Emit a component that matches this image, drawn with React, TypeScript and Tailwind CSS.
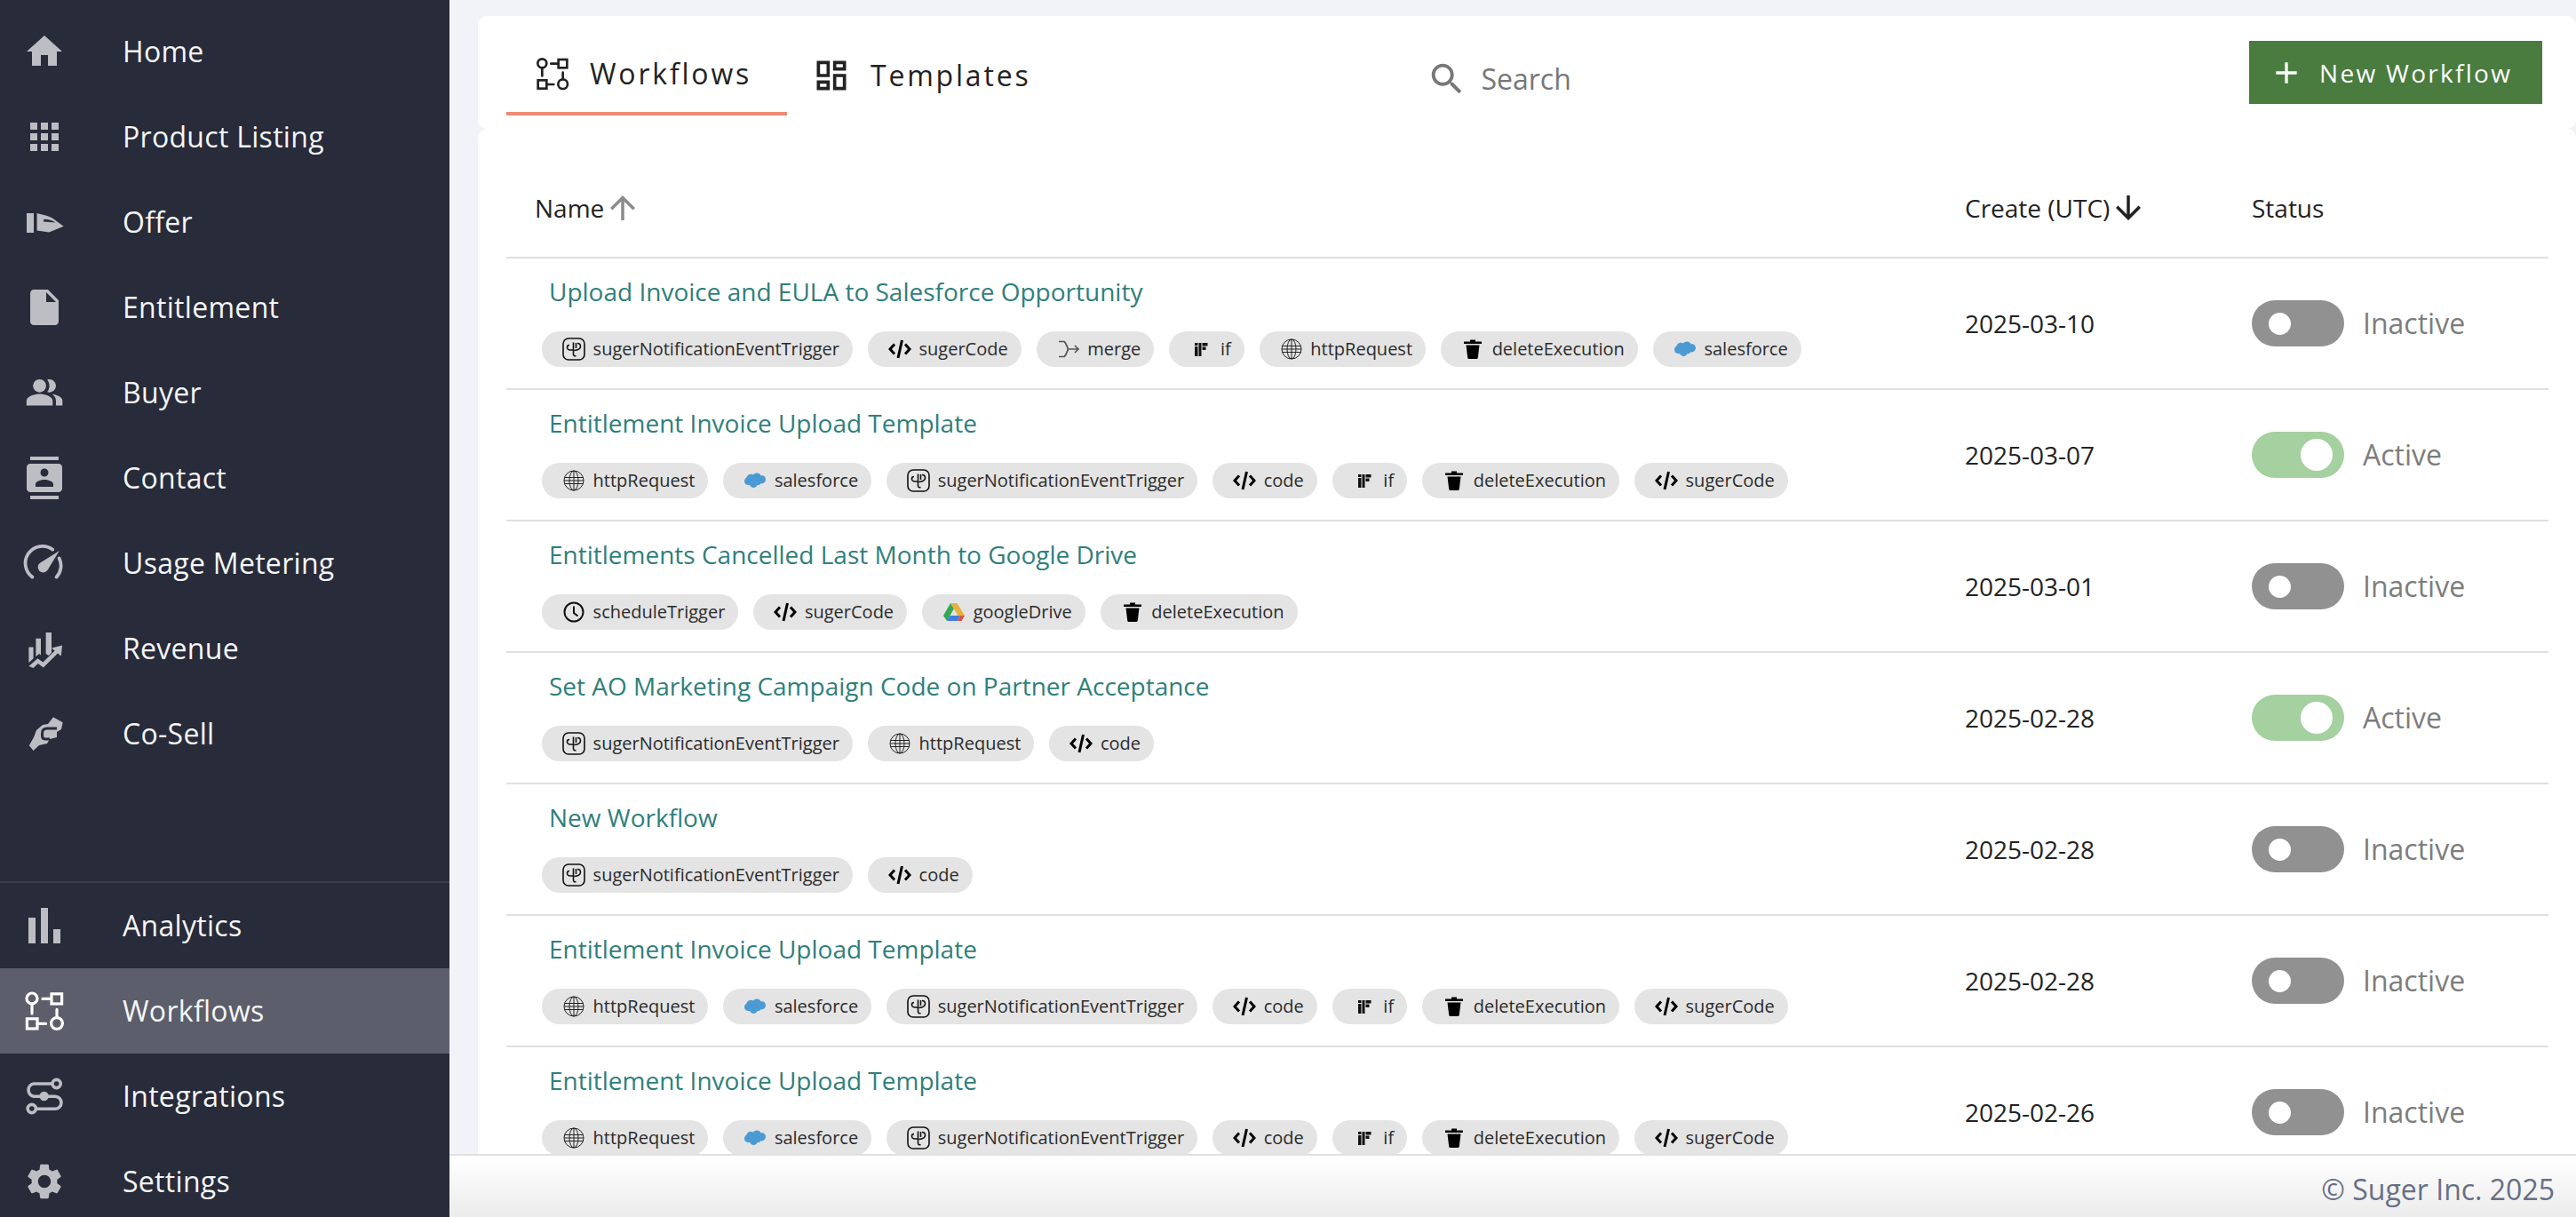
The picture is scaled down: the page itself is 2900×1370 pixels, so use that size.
import { ReactNode } from "react";

type NavItem = { label: string; icon: ReactNode; active?: boolean };
type Chip = "suger" | "sugerCode" | "code" | "merge" | "if" | "http" | "delete" | "salesforce" | "schedule" | "drive";

const HomeIcon = () => <path d="M10 20v-6h4v6h5v-8h3L12 3 2 12h3v8z" />;
const GridIcon = () => (
  <path d="M4 8h4V4H4v4zm6 12h4v-4h-4v4zm-6 0h4v-4H4v4zm0-6h4v-4H4v4zm6 0h4v-4h-4v4zm6-10v4h4V4h-4zm-6 4h4V4h-4v4zm6 6h4v-4h-4v4zm0 6h4v-4h-4v4z" />
);
const OfferIcon = () => (
  <>
    <path d="M2 7h4v11H2z" />
    <path
      fillRule="evenodd"
      d="M7.8 7l5.4 1.4c2.4.7 3.9 1.7 5.3 2.8l4.3 3.2-8.2 3.4-6.8-1V7zm4 3.4l-.4 1.3 6.8.5c-1.8-1.2-3.9-1.8-6.4-1.8z"
    />
  </>
);
const FileIcon = () => (
  <path d="M6 2c-1.1 0-1.99.9-1.99 2L4 20c0 1.1.89 2 1.99 2H18c1.1 0 2-.9 2-2V8l-6-6H6zm7 7V3.5L18.5 9H13z" />
);
const BuyerIcon = () => (
  <g transform="translate(1 .8) scale(.92)">
    <path d="M16.67 13.13C18.04 14.06 19 15.32 19 17v3h4v-3c0-2.18-3.57-3.47-6.33-3.87z" />
    <circle cx="9" cy="8" r="4" />
    <path d="M15 12c2.21 0 4-1.79 4-4s-1.79-4-4-4c-.47 0-.91.1-1.33.24C14.5 5.27 15 6.58 15 8s-.5 2.73-1.33 3.76c.42.14.86.24 1.33.24zm-6 1c-2.67 0-8 1.34-8 4v3h16v-3c0-2.66-5.33-4-8-4z" />
  </g>
);
const ContactIcon = () => (
  <path d="M20 0H4v2h16V0zM4 24h16v-2H4v2zM20 4H4c-1.1 0-2 .9-2 2v12c0 1.1.9 2 2 2h16c1.1 0 2-.9 2-2V6c0-1.1-.9-2-2-2zm-8 2.75c1.24 0 2.25 1.01 2.25 2.25s-1.01 2.25-2.25 2.25S9.75 10.24 9.75 9 10.76 6.75 12 6.75zM17 17H7v-1.5c0-1.67 3.33-2.5 5-2.5s5 .83 5 2.5V17z" />
);
const SpeedIcon = () => (
  <>
    <path
      d="M5.2 19.8A9.4 9.4 0 0 1 16.6 4.3M20.3 9.2a9.4 9.4 0 0 1-1.5 10.6"
      fill="none"
      stroke="currentColor"
      strokeWidth="1.9"
      strokeLinecap="round"
    />
    <path d="M20.4 5l-6.6 10.9a3 3 0 1 1-4.1-4.2z" />
  </>
);
const RevenueIcon = () => (
  <>
    <path d="M3.2 11.2h2.6v6.4L3.2 20zM7.2 6.4h2.8v9.4l-1-.8-1.8 1.6zM12.8 3h3.2v11.4l-1.6 1.6-1.6-1z" />
    <path d="M3.2 22l5-4.4 3 2.2 6.6-6.6-1.800-1.400 6-1.600-.6 6-1.900-1.500-8.100 8-3-2.200-2.600 2.500z" />
  </>
);
const CoSellIcon = () => (
  <>
    <path d="M17 2.600l5.300 3-.8 3.900-2.500 1.500v3l-4 1-1.500 2.500-4.500 1-3.200 3-2.400-2.900L6 14l1.500-4 3.500-3 3-.5z" />
    <path
      d="M10.800 11.500c0-1.700 1.200-2.500 2.700-2.500H19M10.800 11.500v2c0 1 1 1.500 2 1.500H15"
      fill="none"
      stroke="#272b3a"
      strokeWidth="1.500"
    />
  </>
);
const BarsIcon = () => <path d="M3 7.5h4V22H3zM10 2h4v20h-4zM17 14h4v8h-4z" />;
const FlowIcon = () => (
  <g fill="none" stroke="currentColor" strokeWidth="1.6">
    <circle cx="5" cy="5" r="3" />
    <path d="M5 8v5.500M11 5.200h4.300" strokeLinecap="round" />
    <rect x="16" y="2.400" width="5.800" height="5.600" />
    <rect x="2.200" y="16.400" width="5.800" height="5.600" />
    <path d="M8 19.200h4.800M19 15v-3.800" strokeLinecap="round" />
    <circle cx="19" cy="19" r="3.200" />
  </g>
);
const LinkIcon = () => (
  <>
    <g fill="none" stroke="currentColor" strokeWidth="1.8">
      <path d="M16.4 5H6a3.6 3.6 0 0 0 0 7.1H18a3.5 3.5 0 0 1 0 7H7.2" />
      <circle cx="18.8" cy="5" r="2.3" />
      <circle cx="4.9" cy="19" r="2.3" />
    </g>
    <circle cx="11.8" cy="12" r="2.6" />
  </>
);
const GearIcon = () => (
  <path d="M19.14 12.94c.04-.3.06-.61.06-.94 0-.32-.02-.64-.07-.94l2.03-1.58c.18-.14.23-.41.12-.61l-1.92-3.32c-.12-.22-.37-.29-.59-.22l-2.39.96c-.5-.38-1.03-.7-1.62-.94l-.36-2.54c-.04-.24-.24-.41-.48-.41h-3.84c-.24 0-.43.17-.47.41l-.36 2.54c-.59.24-1.13.57-1.62.94l-2.39-.96c-.22-.08-.47 0-.59.22L2.74 8.87c-.12.21-.08.47.12.61l2.03 1.58c-.05.3-.09.63-.09.94s.02.64.07.94l-2.03 1.58c-.18.14-.23.41-.12.61l1.92 3.32c.12.22.37.29.59.22l2.39-.96c.5.38 1.03.7 1.62.94l.36 2.54c.05.24.24.41.48.41h3.84c.24 0 .44-.17.47-.41l.36-2.54c.59-.24 1.13-.56 1.62-.94l2.39.96c.22.08.47 0 .59-.22l1.92-3.32c.12-.22.07-.47-.12-.61l-2.01-1.58zM12 15.6c-1.98 0-3.6-1.62-3.6-3.6s1.62-3.6 3.6-3.6 3.6 1.62 3.6 3.6-1.62 3.6-3.6 3.6z" />
);

const mainNav: NavItem[] = [
  { label: "Home", icon: <HomeIcon /> },
  { label: "Product Listing", icon: <GridIcon /> },
  { label: "Offer", icon: <OfferIcon /> },
  { label: "Entitlement", icon: <FileIcon /> },
  { label: "Buyer", icon: <BuyerIcon /> },
  { label: "Contact", icon: <ContactIcon /> },
  { label: "Usage Metering", icon: <SpeedIcon /> },
  { label: "Revenue", icon: <RevenueIcon /> },
  { label: "Co-Sell", icon: <CoSellIcon /> },
];

const bottomNav: NavItem[] = [
  { label: "Analytics", icon: <BarsIcon /> },
  { label: "Workflows", icon: <FlowIcon />, active: true },
  { label: "Integrations", icon: <LinkIcon /> },
  { label: "Settings", icon: <GearIcon /> },
];

const chipLabels: Record<Chip, string> = {
  suger: "sugerNotificationEventTrigger",
  sugerCode: "sugerCode",
  code: "code",
  merge: "merge",
  if: "if",
  http: "httpRequest",
  delete: "deleteExecution",
  salesforce: "salesforce",
  schedule: "scheduleTrigger",
  drive: "googleDrive",
};

const invoiceChips: Chip[] = ["http", "salesforce", "suger", "code", "if", "delete", "sugerCode"];

const rows: { name: string; chips: Chip[]; date: string; active?: boolean }[] = [
  {
    name: "Upload Invoice and EULA to Salesforce Opportunity",
    chips: ["suger", "sugerCode", "merge", "if", "http", "delete", "salesforce"],
    date: "2025-03-10",
  },
  { name: "Entitlement Invoice Upload Template", chips: invoiceChips, date: "2025-03-07", active: true },
  {
    name: "Entitlements Cancelled Last Month to Google Drive",
    chips: ["schedule", "sugerCode", "drive", "delete"],
    date: "2025-03-01",
  },
  {
    name: "Set AO Marketing Campaign Code on Partner Acceptance",
    chips: ["suger", "http", "code"],
    date: "2025-02-28",
    active: true,
  },
  { name: "New Workflow", chips: ["suger", "code"], date: "2025-02-28" },
  { name: "Entitlement Invoice Upload Template", chips: invoiceChips, date: "2025-02-28" },
  { name: "Entitlement Invoice Upload Template", chips: invoiceChips, date: "2025-02-26" },
];

function ChipIcon({ type }: { type: Chip }) {
  if (type === "suger") {
    return (
      <svg viewBox="0 0 26 26" className="w-[26px] h-[26px]" fill="none" stroke="#111" strokeWidth="1.6">
        <rect x="1" y="1" width="24" height="24" rx="6" />
        <path d="M8 8.500c-1.500 0-2.500 1-2.500 2.500S7 14 9 14h4M12.500 5.500V19c0 1.500 1.500 2 3 1.500M17 6.500c2 0 3.500 1.500 3.500 3.500s-2 4-7 4.500M15.500 6v6" />
      </svg>
    );
  }
  if (type === "sugerCode" || type === "code") {
    return (
      <svg viewBox="0 0 26 26" className="w-[26px] h-[26px]" fill="none" stroke="#000" strokeWidth="3">
        <path d="M7 7.500L2 13l5 5.500M19 7.500l5 5.500-5 5.500" />
        <path d="M15.500 3l-4.500 20" />
      </svg>
    );
  }
  if (type === "merge") {
    return (
      <svg viewBox="0 0 26 26" className="w-[26px] h-[26px]" fill="none" stroke="#555" strokeWidth="1.7">
        <path d="M2 4.500h6c3 2.500 3 5.500 4.500 8.500-1.500 3-1.500 6-4.500 8.500H2M12.500 13H24M20 9l4 4-4 4" />
      </svg>
    );
  }
  if (type === "if") {
    return (
      <svg viewBox="0 0 26 26" className="w-[26px] h-[26px]" fill="#111">
        <path d="M6 10h3.500v11H6zM6 6h3.500v3H6zM10.500 6h3v15h-3zM14.500 6h6v3.500h-6zM14.500 10.500h4V14h-4z" />
      </svg>
    );
  }
  if (type === "http") {
    return (
      <svg viewBox="0 0 26 26" className="w-[26px] h-[26px]" fill="none" stroke="#222" strokeWidth="1">
        <circle cx="13" cy="13" r="11" />
        <ellipse cx="13" cy="13" rx="5" ry="11" />
        <path d="M13 2v22M2.600 9.500h20.800M2.600 16.500h20.800M2 13h22" />
      </svg>
    );
  }
  if (type === "delete") {
    return (
      <svg viewBox="0 0 26 26" className="w-[26px] h-[26px]" fill="#000">
        <path d="M10 2.500h6v2h7V7H3V4.500h7zM5.500 8.500h15l-1.700 14c-.1 1-1 1.500-2 1.500H9.200c-1 0-1.900-.5-2-1.500z" />
      </svg>
    );
  }
  if (type === "salesforce") {
    return (
      <svg viewBox="0 0 26 26" className="w-[26px] h-[26px]">
        <path
          fill="#4b9ad4"
          d="M11 6.500c1-1.200 2.400-1.900 4-1.900 2.100 0 3.900 1.100 4.800 2.800 3-.6 5.200 1.500 5.200 4.400 0 3.100-2.700 5.200-5.600 4.500-.8 1.400-2.300 2.100-3.800 1.800-.8 1.900-2.400 3-4.200 3-1.900 0-3.500-1.200-4.200-3C3.700 18.800 1 16.700 1 13.800c0-1.900 1-3.500 2.500-4.300C4 6.500 8.500 4.500 11 6.500z"
        />
      </svg>
    );
  }
  if (type === "schedule") {
    return (
      <svg viewBox="0 0 26 26" className="w-[26px] h-[26px]" fill="none" stroke="#111" strokeWidth="2">
        <circle cx="13" cy="13" r="10.500" />
        <path d="M13 6.500V14l4.500 3.500" />
      </svg>
    );
  }
  return (
    <svg viewBox="0 0 26 26" className="w-[26px] h-[26px]">
      <path fill="#34a853" d="M9 3L1 17l4 6 8-14z" />
      <path fill="#e8b13b" d="M9 3h7.500L25 17h-7.500z" />
      <path fill="#3f7ee0" d="M5 23l3.500-6H20l-3 6z" />
      <path fill="#e0513f" d="M20 17h5l-3.500 6H17z" />
    </svg>
  );
}

function ChipPill({ type }: { type: Chip }) {
  return (
    <span className="flex items-center h-10 rounded-[20px] bg-[#e4e4e4] pl-[22px] pr-[15px]">
      <span className="flex items-center justify-center w-[28px]">
        <ChipIcon type={type} />
      </span>
      <span className="ml-[7.6px] text-[20px] text-[#2b2b2b] leading-none">{chipLabels[type]}</span>
    </span>
  );
}

function NavRow({ item }: { item: NavItem }) {
  return (
    <div
      className={`flex items-center h-24 pl-[26px] ${item.active ? "bg-[#5c5e6b] text-white" : "text-[#bcbec3]"}`}
    >
      <svg viewBox="0 0 24 24" className="w-12 h-12 shrink-0" fill="currentColor">
        {item.icon}
      </svg>
      <span className="ml-[64px] text-[32px] tracking-[0.3px] text-[#f5f5f6]">{item.label}</span>
    </div>
  );
}

function Toggle({ active }: { active?: boolean }) {
  return (
    <div className="flex items-center">
      <span
        className={`flex items-center w-[104px] h-[52px] rounded-[26px] ${
          active ? "bg-[#a5d0a0] justify-end pr-[13px]" : "bg-[#919191] pl-[19px]"
        }`}
      >
        <span className={`rounded-full bg-white ${active ? "w-9 h-9" : "w-[25px] h-[25px]"}`} />
      </span>
      <span className="ml-[21px] text-[32px] text-[#7d7d7d]">{active ? "Active" : "Inactive"}</span>
    </div>
  );
}

function SortArrow({ up, className }: { up?: boolean; className: string }) {
  return (
    <svg viewBox="0 0 24 24" className={`w-[42px] h-[42px] ${className}`} fill="currentColor">
      {up ? (
        <path d="M4 12l1.410 1.410L11 7.830V20h2V7.830l5.580 5.590L20 12l-8-8-8 8z" />
      ) : (
        <path d="M20 12l-1.410-1.410L13 16.170V4h-2v12.170l-5.580-5.590L4 12l8 8 8-8z" />
      )}
    </svg>
  );
}

export default function App() {
  return (
    <div className="flex h-screen overflow-hidden font-['Open_Sans',sans-serif] bg-[#f1f3f8]">
      <aside className="flex flex-col w-[506px] shrink-0 bg-[#272b3a]">
        <nav className="flex-1 pt-[10px]">
          {mainNav.map((item) => (
            <NavRow key={item.label} item={item} />
          ))}
        </nav>
        <nav className="border-t-2 border-[#3a3e4d] mb-[-8px]">
          {bottomNav.map((item) => (
            <NavRow key={item.label} item={item} />
          ))}
        </nav>
      </aside>

      <main className="flex flex-col flex-1 min-w-0">
        <div className="flex-1 min-h-0 overflow-hidden pl-[32px] pt-[18px]">
          <div className="flex items-start h-[127px] pl-[32px] pr-[38px] bg-white rounded-[10px]">
            <div className="flex items-center h-[112px] w-[316px] pt-[22px] pl-[32px] border-b-4 border-[#ee8a74] text-[#222]">
              <svg viewBox="0 0 24 24" className="w-10 h-10" fill="currentColor">
                <FlowIcon />
              </svg>
              <span className="ml-[22px] text-[32px] tracking-[2.8px]">Workflows</span>
            </div>
            <div className="flex items-center h-[112px] pt-[22px] pl-[28px] text-[#222]">
              <svg viewBox="0 0 24 24" className="w-11 h-11" fill="currentColor">
                <path d="M19 5v2h-4V5h4M9 5v6H5V5h4m10 8v6h-4v-6h4M9 17v2H5v-2h4M21 3h-8v6h8V3zM11 3H3v10h8V3zm10 8h-8v10h8V11zm-10 4H3v6h8v-6z" />
              </svg>
              <span className="ml-[22px] text-[32px] tracking-[2.8px]">Templates</span>
            </div>
            <div className="flex items-center mt-[47px] ml-[446px] text-[#777]">
              <svg viewBox="0 0 24 24" className="w-[46px] h-[46px]" fill="currentColor">
                <path d="M15.500 14h-.79l-.28-.27C15.410 12.590 16 11.110 16 9.500 16 5.910 13.090 3 9.500 3S3 5.910 3 9.500 5.910 16 9.500 16c1.610 0 3.090-.59 4.230-1.570l.27.28v.79l5 4.990L20.490 19l-4.990-5zm-6 0C7.010 14 5 11.990 5 9.500S7.010 5 9.500 5 14 7.010 14 9.500 11.990 14 9.500 14z" />
              </svg>
              <span className="ml-[15px] text-[32px]">Search</span>
            </div>
            <button className="flex items-center ml-auto mt-[28px] h-[71px] w-[330px] pl-[22px] bg-[#4a7c3f] text-white">
              <svg viewBox="0 0 24 24" className="w-10 h-10" fill="currentColor">
                <path d="M19 13h-6v6h-2v-6H5v-2h6V5h2v6h6v2z" />
              </svg>
              <span className="ml-[17px] text-[28px] tracking-[2.3px]">New Workflow</span>
            </button>
          </div>

          <div className="bg-white rounded-[10px] pl-[32px] pr-[31px]">
            <div className="grid grid-cols-[1642px_323px_1fr] items-center h-[146px] pt-[34px] border-b-2 border-[#e0e0e0] text-[28px] text-[#222]">
              <div className="flex items-center pl-[32px]">
                Name
                <SortArrow up className="text-[#8a8a8a]" />
              </div>
              <div className="flex items-center">
                Create (UTC)
                <SortArrow className="text-[#222]" />
              </div>
              <div>Status</div>
            </div>
            {rows.map((row, idx) => (
              <div
                key={idx}
                className="grid grid-cols-[1642px_323px_1fr] items-center h-[148px] border-b-2 border-[#e0e0e0]"
              >
                <div className="pl-[40px] pb-[4px]">
                  <div className="pl-[8px] text-[28px] leading-[35px] text-[#2f7f7c]">{row.name}</div>
                  <div className="flex gap-[17px] mt-[27px]">
                    {row.chips.map((chip, i) => (
                      <ChipPill key={i} type={chip} />
                    ))}
                  </div>
                </div>
                <div className="text-[28px] text-[#222]">{row.date}</div>
                <Toggle active={row.active} />
              </div>
            ))}
          </div>
        </div>

        <footer className="flex items-center justify-end shrink-0 h-[71px] pt-[6px] pr-[24px] border-t-2 border-[#e0e0e0] bg-gradient-to-b from-white to-[#ececec]">
          <span className="text-[32px] text-[#667085]">© Suger Inc. 2025</span>
        </footer>
      </main>
    </div>
  );
}
